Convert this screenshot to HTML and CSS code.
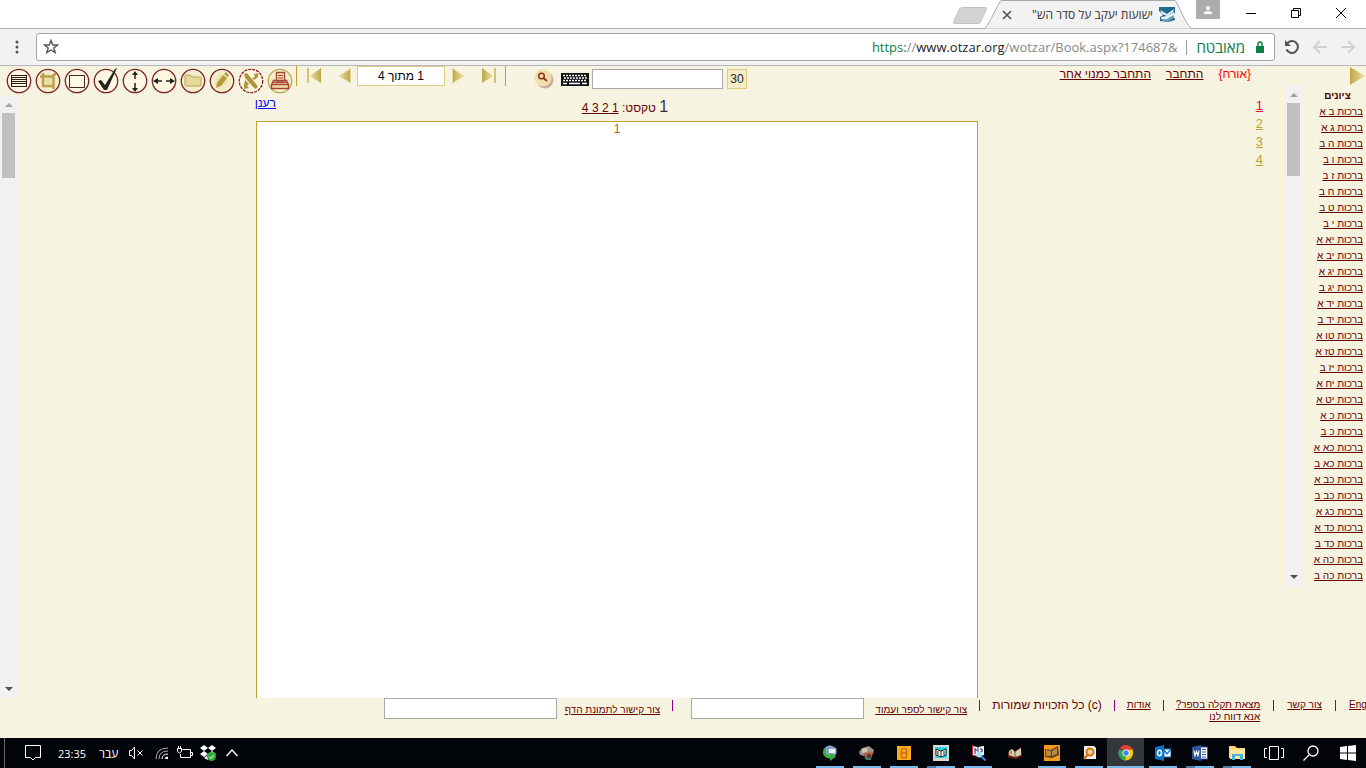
FILE: index.html
```html
<!DOCTYPE html>
<html lang="he">
<head>
<meta charset="utf-8">
<title>ישועות יעקב על סדר הש"ס</title>
<link rel="stylesheet" href="styles.css">
</head>
<body>
<header class="tabs">
  <button class="new-tab" aria-label="כרטיסייה חדשה"></button>
  <div class="tab">
    <svg class="tab-shape" viewBox="0 0 208 29" preserveAspectRatio="none"><path d="M0 28.5L2 28C4 27 15 1 17 .5H191C193 1 203 27 206 28L208 28.5Z" fill="#f2f2f2"/><path d="M0 28.5C4 28 15 1 17 .5H191C193 1 203 28 208 28.5" fill="none" stroke="#a9a9a9"/></svg>
    <button class="tab-close" aria-label="סגור"><svg width="10" height="10" viewBox="0 0 10 10"><path d="M1 1L9 9M9 1L1 9" stroke="#555" stroke-width="1.7"/></svg></button>
    <span class="tab-title" dir="rtl">ישועות יעקב על סדר הש"</span>
    <svg width="16" height="16" viewBox="0 0 16 16"><path d="M0 0H16V6L13 8 16 12V13L9 15 1 14V10L4 8 0 4Z" fill="#24688c"/><path d="M1 3L8 7 15 2 14 5 8 9 3 7ZM2 10L8 9 15 5V8L7 13 2 12Z" fill="#e5f1f6"/><path d="M2 13L8 12 15 8V11L8 15Z" fill="#6ea2ba"/></svg>
  </div>
  <button class="user" aria-label="משתמש"><svg width="10" height="10" viewBox="0 0 10 10"><circle cx="5" cy="3" r="2" fill="#fff"/><path d="M1 9V8Q1 6 5 6T9 8V9Z" fill="#fff"/></svg></button>
  <div class="win">
    <button aria-label="מזער"><svg width="12" height="12"><path d="M1 6.500H11" stroke="#000"/></svg></button>
    <button aria-label="שחזר"><svg width="12" height="12" fill="none" stroke="#000"><path d="M1.500 3.500H8.500V10.500H1.500ZM3.500 3.500V1.500H10.500V8.500H8.500"/></svg></button>
    <button aria-label="סגור חלון"><svg width="12" height="12" stroke="#000"><path d="M1 1L11 11M11 1L1 11"/></svg></button>
  </div>
</header>
<nav class="omni">
  <button aria-label="תפריט"><svg width="4" height="14" fill="#555"><circle cx="2" cy="2" r="1.500"/><circle cx="2" cy="7" r="1.500"/><circle cx="2" cy="12" r="1.500"/></svg></button>
  <div class="address">
    <svg width="16" height="16" viewBox="0 0 16 16"><path d="M8 1.500L9.800 6H14.500L10.800 9 12.200 13.700 8 11 3.800 13.700 5.200 9 1.500 6H6.200Z" fill="none" stroke="#555" stroke-width="1.400"/></svg>
    <div class="url" role="textbox" contenteditable="true" spellcheck="false" aria-label="כתובת"><span class="scheme">https:</span>//<span class="host">www.otzar.org</span>/wotzar/Book.aspx?174687&amp;</div>
    <span class="rule"></span>
    <span class="secure">מאובטח</span>
    <svg class="lock" width="8" height="12" viewBox="0 0 8 12"><path d="M2 6V3Q2 1 4 1T6 3V6" fill="none" stroke="#0b8043" stroke-width="1.500"/><path d="M0 5H8V12H0Z" fill="#0b8043"/></svg>
  </div>
  <button aria-label="רענן"><svg width="16" height="16" viewBox="0 0 16 16" fill="none" stroke="#555" stroke-width="2"><path d="M3 4.500A6 6 0 1 1 2.500 10.500"/><path d="M1 1V7H7Z" fill="#555" stroke="none"/></svg></button>
  <button aria-label="אחורה"><svg width="16" height="16" fill="none" stroke="#d0d0d0" stroke-width="2"><path d="M15 8H2M8 2L2 8 8 14"/></svg></button>
  <button aria-label="קדימה"><svg width="16" height="16" fill="none" stroke="#d0d0d0" stroke-width="2"><path d="M1 8H14M8 2L14 8 8 14"/></svg></button>
</nav>
<svg class="defs" width="0" height="0" aria-hidden="true"><defs><linearGradient id="gold" x2="1"><stop stop-color="#bfa645"/><stop offset="1" stop-color="#eee1a5"/></linearGradient><linearGradient id="goldl" x2="1"><stop stop-color="#e8dca3"/><stop offset="1" stop-color="#bfa645"/></linearGradient><radialGradient id="disc"><stop stop-color="#e6dba1"/><stop offset="1" stop-color="#faf4d8"/></radialGradient></defs></svg>
<main class="page">
  <div class="main">
    <div class="toolbar">
      <div class="tools">
        <button aria-label="שורות"><svg viewBox="0 0 26 26"><circle cx="13" cy="13" r="11.700" fill="#fff7df" stroke="#7b2424" stroke-width="1.300"/><path d="M5 7.500H21M5 9.500H21M5 11.500H21M5 13.500H21M5 15.500H21M5 18.500H21M5.500 7V19M20.500 7V19" stroke="#2b1a10"/></svg></button>
        <button aria-label="חיתוך"><svg viewBox="0 0 26 26"><circle cx="13" cy="13" r="11.700" fill="url(#disc)" stroke="#7b2424" stroke-width="1.300"/><path d="M8 5V18H18M5 8.500H18.500V21M18 8L21 5" fill="none" stroke="#b9a24c" stroke-width="2.500"/></svg></button>
        <button aria-label="מסגרת"><svg viewBox="0 0 26 26"><circle cx="13" cy="13" r="11.700" fill="#fff7df" stroke="#7b2424" stroke-width="1.300"/><path d="M5.500 7.500H20.500V19.500H5.500Z" fill="#fff8e5" stroke="#3b2a18"/></svg></button>
        <button aria-label="סימון"><svg viewBox="0 0 26 26"><circle cx="13" cy="13" r="11.700" fill="#fff7df" stroke="#7b2424" stroke-width="1.300"/><path d="M5 13L8 12 12 17 22 1 24 0 14 22H11Z" fill="#222"/></svg></button>
        <button aria-label="התאם לגובה"><svg viewBox="0 0 26 26"><circle cx="13" cy="13" r="11.700" fill="#fff7df" stroke="#7b2424" stroke-width="1.300"/><path d="M13 5V11M13 15V21" stroke="#222" stroke-width="1.500"/><path d="M10 7L13 3 16 7ZM10 20L13 24 16 20Z" fill="#222"/></svg></button>
        <button aria-label="התאם לרוחב"><svg viewBox="0 0 26 26"><circle cx="13" cy="13" r="11.700" fill="#fff7df" stroke="#7b2424" stroke-width="1.300"/><path d="M5 13H11M15 13H21" stroke="#222" stroke-width="1.500"/><path d="M7 10L2 13 7 16ZM19 10L24 13 19 16Z" fill="#222"/></svg></button>
        <button aria-label="תיקייה"><svg viewBox="0 0 26 26"><circle cx="13" cy="13" r="11.700" fill="url(#disc)" stroke="#7b2424" stroke-width="1.300"/><path d="M5 8Q5 7 6 7H10L12 9H20Q21 9 21 10V17Q21 18 20 18H6Q5 18 5 17Z" fill="#e5d999" stroke="#b9a552"/></svg></button>
        <button aria-label="עריכה"><svg viewBox="0 0 26 26"><circle cx="13" cy="13" r="11.700" fill="url(#disc)" stroke="#7b2424" stroke-width="1.300"/><path d="M7 20L8 15 14 7 18 10 12 18ZM15 6L17 4 20 7 19 9Z" fill="#b39a3b"/></svg></button>
        <button aria-label="זיהוי טקסט"><svg viewBox="0 0 26 26"><circle cx="13" cy="13" r="11.700" fill="#fff7df" stroke="#7b2424" stroke-width="1.300" stroke-dasharray="3 1"/><path d="M6 6L9 5 18 16 20 19 17 21 7 10ZM16 6L20 5 20 9 16 12 14 10 17 9ZM7 12L11 16 9 18 11 20 6 21V17Z" fill="#ad953d"/></svg></button>
        <button aria-label="הדפסה"><svg viewBox="0 0 26 26"><circle cx="13" cy="13" r="11.700" fill="url(#disc)" stroke="#bba74e" stroke-width="1.300"/><path d="M9.500 4.500H17.500V13H9.500ZM6.500 12.500H19.500L21.500 16.500H4.500ZM4.500 16.500H21.500V20.500H4.500Z" fill="#f0dfad" stroke="#a64334" stroke-width="1.300"/><path d="M11 7.500H16M11 10H16M6 14.500H20" stroke="#a64334"/></svg></button>
      </div>
      <div class="pager">
        <button aria-label="ראשון"><svg width="16" height="16"><path d="M1 0H3V15H1Z" fill="#d7c46c"/><path d="M15 0V15L4 8Z" fill="url(#goldl)"/></svg></button>
        <button aria-label="הקודם"><svg width="13" height="16"><path d="M12.500 .5V15L1 8Z" fill="url(#goldl)" stroke="#e6dba5"/></svg></button>
        <input class="page-no" dir="rtl" value="1 מתוך 4" aria-label="עמוד">
        <button aria-label="הבא"><svg width="13" height="16"><path d="M.5 .5V15L12 8Z" fill="url(#gold)" stroke="#e6dba5"/></svg></button>
        <button aria-label="אחרון"><svg width="16" height="16"><path d="M13 0H15V15H13Z" fill="#d7c46c"/><path d="M1 0V15L12 8Z" fill="url(#gold)"/></svg></button>
      </div>
      <div class="search">
        <button aria-label="חיפוש"><svg width="20" height="20"><circle cx="11" cy="11" r="8.500" fill="#c9a9a3"/><circle cx="9" cy="9" r="8.500" fill="#f1dfa8"/><circle cx="7.500" cy="7" r="2.800" fill="none" stroke="#8a3528" stroke-width="1.500"/><path d="M9.500 9L13 12" stroke="#8a3528" stroke-width="2"/></svg></button>
        <button class="keys" aria-label="מקלדת"><svg width="28" height="13"><path d="M0 0H28V13H0Z" fill="#111"/><path d="M2 2.500H26M3 5H26M2 7.500H26" stroke="#fff" stroke-width="1.500" stroke-dasharray="2 1"/><path d="M2 10.500H6M8 10.500H19M21 10.500H26" stroke="#fff" stroke-width="1.500"/></svg></button>
        <input aria-label="טקסט לחיפוש">
        <button class="thirty">30</button>
      </div>
      <div class="account" dir="rtl"><span class="guest">{אורח}</span><a href="#">התחבר</a><a href="#">התחבר כמנוי אחר</a></div>
    </div>
    <div class="content">
      <div class="scroll"><i class="up"></i><i class="thumb"></i><i class="down"></i></div>
      <div class="refresh"><a href="#">רענן</a></div>
      <section class="doc">
        <p class="pages" dir="rtl"><span class="big">1</span> טקסט: <a href="#">1 </a><a href="#">2 </a><a href="#">3 </a><a href="#">4</a></p>
        <div class="sheet">1</div>
      </section>
      <nav class="thumbs"><a class="on" href="#">1</a><a href="#">2</a><a href="#">3</a><a href="#">4</a></nav>
    </div>
  </div>
  <aside class="side">
    <button class="fold" aria-label="הסתר"><svg width="16" height="18"><path d="M1 0V18L16 9Z" fill="url(#gold)"/></svg></button>
    <div class="side-body">
      <div class="scroll"><i class="up"></i><i class="thumb"></i><i class="down"></i></div>
      <nav class="refs" dir="rtl">
        <h2>ציונים</h2>
        <a href="#">ברכות ב א</a><a href="#">ברכות ג א</a><a href="#">ברכות ה ב</a><a href="#">ברכות ו ב</a><a href="#">ברכות ז ב</a><a href="#">ברכות ח ב</a><a href="#">ברכות ט ב</a><a href="#">ברכות י ב</a><a href="#">ברכות יא א</a><a href="#">ברכות יב א</a><a href="#">ברכות יג א</a><a href="#">ברכות יג ב</a><a href="#">ברכות יד א</a><a href="#">ברכות יד ב</a><a href="#">ברכות טו א</a><a href="#">ברכות טז א</a><a href="#">ברכות יז ב</a><a href="#">ברכות יח א</a><a href="#">ברכות יט א</a><a href="#">ברכות כ א</a><a href="#">ברכות כ ב</a><a href="#">ברכות כא א</a><a href="#">ברכות כא ב</a><a href="#">ברכות כב א</a><a href="#">ברכות כב ב</a><a href="#">ברכות כג א</a><a href="#">ברכות כד א</a><a href="#">ברכות כד ב</a><a href="#">ברכות כה א</a><a href="#">ברכות כה ב</a>
      </nav>
    </div>
  </aside>
</main>
<footer class="foot" dir="rtl">
  <a class="end" href="#" dir="ltr">Eng</a><i class="roomy"></i>
  <a href="#">צור קשר</a><i class="roomy"></i>
  <a href="#">מצאת תקלה בספר?<br>אנא דווח לנו</a><i></i>
  <a href="#">אודות</a><i></i>
  <span class="copy">(c) כל הזכויות שמורות</span><i></i>
  <div class="link-box"><a href="#">צור קישור לספר ועמוד</a><input aria-label="קישור לספר ועמוד"></div><i></i>
  <div class="link-box"><a href="#">צור קישור לתמונת הדף</a><input aria-label="קישור לתמונת הדף"></div>
</footer>
<div class="taskbar">
  <div class="tray">
    <svg width="18" height="18" fill="none" stroke="#fff"><path d="M1.500 1.500H16.500V13.500H11.500L9 16 6.500 13.500H1.500Z"/></svg>
    <span class="clock">23:35</span>
    <span class="lang">עבר</span>
    <svg width="16" height="16" fill="none" stroke="#fff"><path d="M1.500 5.500H3.500L6.500 2V14L3.500 10.500H1.500ZM9.500 5.500L14.500 10.500M14.500 5.500L9.500 10.500"/></svg>
    <svg class="wifi" width="15" height="15" fill="none" stroke="#aaa"><path d="M1 13Q1 2 13 2M4 13Q4 5 13 5"/><path d="M7 13Q7 8 13 8M10 13Q10 11 13 11" stroke="#fff"/><path d="M11 11H13V13H11Z" fill="#fff" stroke="none"/></svg>
    <svg width="18" height="16" fill="none" stroke="#fff"><path d="M6.500 4.500H14.500V12.500H4.500V9M14.500 7.500H16.500V10.500H14.500M1.500 3.500H5.500V6.500L3.500 8 1.500 6.500ZM2.500 1V3M4.500 1V3"/></svg>
    <svg class="box" width="18" height="18"><path d="M5 1L9 4 5 7 1 4ZM13 1L17 4 13 7 9 4ZM5 7L9 10 5 13 1 10ZM9 10L13 7 17 10 13 13ZM5 14L9 11V16Z" fill="#fff"/><circle cx="12.500" cy="12.500" r="4.500" fill="#2cab3c"/><path d="M10 12.500L12 14.500 15 11" fill="none" stroke="#fff"/></svg>
    <svg width="14" height="16" fill="none" stroke="#fff" stroke-width="1.300"><path d="M1.500 11L7 5 12.500 11"/></svg>
  </div>
  <div class="apps">
    <button class="run" aria-label="סנכרון"><svg viewBox="0 0 16 16"><circle cx="8" cy="7" r="6.500" fill="#8cb0d8"/><path d="M6 3H14V9H6Z" fill="#e7eefa" stroke="#5876a8"/><path d="M2 3Q-2 12 8 13V16L14 11.500 8 8V10.500Q3 10 4 4Z" fill="#3aad35"/></svg></button>
    <button class="run" aria-label="תמונות"><svg viewBox="0 0 16 16"><path d="M0 7L3 3 10 1 15 5 14 9 7 8 5 11 1 10Z" fill="#9a8e7e"/><path d="M5 8L14 7 13 12 6 14Z" fill="#b85b43"/><path d="M3 4L9 3 8 7 3 8Z" fill="#cdc6b6"/><path d="M7 12H12V15H7Z" fill="#417760"/><circle cx="10" cy="11" r="2" fill="#513228"/></svg></button>
    <button class="run" aria-label="8"><svg viewBox="0 0 16 16"><path d="M1 1H15V15H1Z" fill="#faac1c"/><path d="M5.500 4.500L6.500 3.500H9.500L10.500 4.500V12L9.500 13H6.500L5.500 12ZM6 8H10" fill="none" stroke="#d2691e" stroke-width="1.600"/></svg></button>
    <button class="run multi" aria-label="ספר"><svg viewBox="0 0 16 16"><path d="M0 0H16V16H0Z" fill="#d9d7d0"/><path d="M2 2H14V13H2Z" fill="#21d7e7"/><path d="M3 4L8 6 13 4V10L8 12 3 10Z" fill="#fff" stroke="#222"/><path d="M8 6V12M5 6V10M11 6V10" stroke="#222"/></svg></button>
    <button class="run" aria-label="חיפוש בספר"><svg viewBox="0 0 16 16"><path d="M2 1L8 2 14 1V10L8 11 2 10Z" fill="#fff"/><path d="M2.500 0V10.500L8 11.500" fill="none" stroke="#c51e2b"/><path d="M4 4H6V6H4M10 4H12V7H10M8 2V10M4 8H6" fill="none" stroke="#132277"/><circle cx="9.500" cy="9.500" r="3" fill="#9eeaff"/><path d="M11.500 11.500L15.500 15.500" stroke="#3186f5" stroke-width="2"/></svg></button>
    <button aria-label="ספרייה"><svg viewBox="0 0 16 16"><path d="M1 7L5 4 8 6 14 2 15 11 9 14 1 12Z" fill="#7c211d"/><path d="M2 6L5 4 8 7 14 3 14 10 8 12 2 10Z" fill="#d8ceb1"/><path d="M8 6V12M4 6V9" stroke="#576039"/></svg></button>
    <button class="run" aria-label="אוצר"><svg viewBox="0 0 16 16"><path d="M0 0H16V16H0Z" fill="#f4991e"/><path d="M1 4L7 5 14 1 15 10 8 13 1 12Z" fill="#594221"/><path d="M2 5L7 6 7 11 2 11ZM8 6L13 3V9L8 11Z" fill="#b38b46"/></svg></button>
    <button class="run" aria-label="איתור"><svg viewBox="0 0 16 16"><path d="M3 1H13L15 3V14H3Z" fill="#eee"/><circle cx="9" cy="7" r="3.500" fill="#f6d39a" stroke="#d47411" stroke-width="2"/><path d="M7 9L3 14" stroke="#d47411" stroke-width="2.500"/></svg></button>
    <button class="run active" aria-label="Chrome"><svg viewBox="0 0 16 16"><path d="M8 8L2 3A7.500 7.500 0 0 1 15 5Z" fill="#e34133"/><path d="M8 8H15A7.500 7.500 0 0 1 7 15.500Z" fill="#fbc916"/><path d="M8 8L7 15.500A7.500 7.500 0 0 1 1.500 4Z" fill="#30a652"/><path d="M8 4.500H14.500A7.500 7.500 0 0 1 15 9L8 11Z" fill="#fbc916"/><path d="M2 3A7.500 7.500 0 0 1 14.500 4.500H8Z" fill="#e34133"/><circle cx="8" cy="8" r="3.500" fill="#fff"/><circle cx="8" cy="8" r="2.700" fill="#4285f4"/></svg></button>
    <button class="run" aria-label="Outlook"><svg viewBox="0 0 16 16"><path d="M9 4H16V12H9Z" fill="#fff" stroke="#0872c6"/><path d="M9 5L12 9 16 4" fill="none" stroke="#0872c6" stroke-width="1.300"/><path d="M0 2L9 0V16L0 14Z" fill="#0872c6"/><ellipse cx="4.500" cy="8" rx="2" ry="2.700" fill="none" stroke="#fff" stroke-width="1.500"/></svg></button>
    <button class="run multi" aria-label="Word"><svg viewBox="0 0 16 16"><path d="M8 2H15.500V14H8Z" fill="#fff" stroke="#2b579a"/><path d="M10 4.500H14M10 7H14M10 9.500H14M10 12H14" stroke="#2b579a"/><path d="M0 2L9 0V16L0 14Z" fill="#2b579a"/><path d="M2 5.500L3 10.500 4.500 6.500 6 10.500 7 5.500" fill="none" stroke="#fff" stroke-width="1.200"/></svg></button>
    <button class="run multi" aria-label="סייר הקבצים"><svg viewBox="0 0 16 16"><path d="M0 1H6L8 3H16V13H0Z" fill="#f8d671"/><path d="M1 4H16V14H1Z" fill="#ffe69b"/><path d="M3 15V9H14V15H11V11H6V15Z" fill="#45b3e8"/></svg></button>
    <button aria-label="תצוגת משימות"><svg class="wide" viewBox="0 0 20 16" fill="none" stroke="#fff"><path d="M5.500 1.500H14.500V14.500H5.500ZM3 3.500H.5V12.500H3M17 3.500H19.500V12.500H17"/></svg></button>
    <button aria-label="חיפוש"><svg viewBox="0 0 16 16" fill="none" stroke="#fff" stroke-width="1.300"><circle cx="10" cy="6" r="5"/><path d="M6.500 9.500L.5 15.500"/></svg></button>
    <button aria-label="התחל"><svg viewBox="0 0 16 16"><path d="M0 2L7 1V7.500H0ZM8 1L16 0V7.500H8ZM0 8.500H7V15L0 14ZM8 8.500H16V16L8 15Z" fill="#fff"/></svg></button>
  </div>
</div>
</body>
</html>
```

FILE: styles.css
```css
* { box-sizing: border-box; }
body { margin: 0; height: 100vh; display: flex; flex-direction: column; overflow: hidden; background: #f7f3e1; color: #600; font-family: "Liberation Sans", Arial, sans-serif; font-size: 12px; }
button { padding: 0; border: 0; background: none; display: flex; align-items: center; justify-content: center; font: inherit; }
svg { display: block; flex: none; }
a { color: #600; }
i { flex: none; }
input { font: inherit; border: 1px solid #a9a9a9; background: #fff; padding: 0 2px; }
.defs { position: absolute; }

.tabs { flex: none; height: 29px; display: flex; justify-content: flex-end; background: #fff; border-bottom: 1px solid #b4b4b4; font-family: "Open Sans", "Noto Sans", sans-serif; color: #333; }
.new-tab { width: 28px; height: 17px; margin: 7px 0 0; background: #d3d3d3; border: 1px solid #c2c2c2; border-radius: 3px; transform: skewX(-24deg); }
.tab { position: relative; width: 208px; height: 29px; margin-right: 4px; display: flex; align-items: center; gap: 6px; padding: 0 17px 0 18px; }
.tab > * { position: relative; }
.tab .tab-shape { position: absolute; left: 0; top: 0; width: 100%; height: 29px; }
.tab-title { flex: 1; white-space: nowrap; font-size: 12px; overflow: hidden; }
.user { width: 24px; height: 19px; background: #adadad; }
.win { display: flex; height: 26px; padding: 0 3px 0 8px; }
.win button { width: 45px; }

.omni { flex: none; height: 37px; display: flex; align-items: center; padding: 0 10px 0 15px; gap: 12px; background: #f2f2f2; border-bottom: 1px solid #b8b6b6; font-family: "Open Sans", "Noto Sans", sans-serif; }
.address { flex: 1; height: 28px; margin: 0 -3px 0 5px; display: flex; align-items: center; padding: 0 10px 0 6px; background: #fff; border: 1px solid #a6a6a6; border-radius: 3px; font-size: 14px; }
.url { flex: 1; text-align: right; color: #888; outline: 0; white-space: nowrap; font-size: 13px; }
.scheme { color: #0b8043; }
.host { color: #222; }
.rule { width: 1px; height: 15px; margin: 0 9px; background: #999; }
.secure { color: #0b8043; font-size: 15px; line-height: 20px; }
.lock { margin-left: 11px; }

.page { flex: 1; min-height: 0; display: flex; }
.main { flex: 1; min-width: 0; display: flex; flex-direction: column; }
.toolbar { flex: none; height: 30px; display: flex; align-items: flex-start; }
.tools { display: flex; gap: 3px; padding: 2px 3px 0 6px; }
.tools svg { width: 26px; height: 26px; }
.pager { height: 20px; display: flex; align-items: center; border: solid #c0a030; border-width: 0 1px; padding: 0 8px 0 9px; }
.pager button:nth-of-type(1) { margin-right: 16px; }
.pager button:nth-of-type(4) { margin-left: 16px; }
.page-no { width: 88px; height: 20px; margin: 0 7px 0 6px; border-color: #dfcb7e; text-align: center; }
.search { display: flex; align-items: center; padding: 3px 0 0 28px; }
.search input { width: 131px; height: 20px; margin: 0 4px 0 3px; }
.keys { margin-left: 7px; }
.thirty { width: 20px; height: 20px; border: 1px solid #dfcb7e; background: #f5edc8; color: #222; }
.account { flex: 1; display: flex; gap: 15px; padding: 0 34px 0 0; line-height: 16px; }
.guest { color: #f00; }

.content { flex: 1; min-height: 0; display: grid; grid-template-columns: 17px 239fr 722fr 307fr; }
.scroll { flex: none; width: 17px; display: flex; flex-direction: column; align-items: center; background: #f1f1f1; }
.up, .down { border: 4px solid transparent; }
.up { border-top: 0; border-bottom-color: #a3a3a3; margin: 7px 0 6px; }
.down { border-bottom: 0; border-top-color: #505050; margin: auto 0 7px; }
.thumb { width: 13px; height: 65px; background: #c1c1c1; }
.refresh { text-align: right; line-height: 14px; }
.refresh a { color: #00f; margin-right: -20px; }
.doc { display: flex; flex-direction: column; }
.pages { margin: 0; height: 25px; line-height: 21px; text-align: center; padding-left: 16px; }
.big { font-size: 16px; color: #333; }
.sheet { flex: 1; background: #fff; border: 1px solid #c0a030; border-bottom: 0; text-align: center; line-height: 14px; color: #a06418; }
.thumbs { display: flex; flex-direction: column; align-items: flex-end; padding: 1px 22px 0 0; line-height: 18px; font-size: 13px; }
.thumbs a { color: #c0a030; }
.thumbs .on { color: #f03; }

.side { flex: none; width: 81px; }
.fold { height: 20px; margin: 0 1px 0 auto; }
.side-body { height: 500px; display: flex; }
.side .thumb { height: 73px; }
.refs { flex: 1; display: flex; flex-direction: column; padding: 2px 3px 0 0; font-size: 10px; line-height: 16px; white-space: nowrap; }
.refs h2 { margin: 0; padding-left: 14px; padding-right: 4px; font-size: 10px; line-height: 16px; text-align: center; color: #400; }

.foot { flex: none; height: 40px; display: flex; align-items: flex-start; font-size: 10px; line-height: 12px; white-space: nowrap; overflow: hidden; }
.foot > a, .copy { margin-top: 1px; }
.foot > i { width: 1px; height: 11px; margin: 2px 12px 0; background: #808; }
.foot > .roomy { margin: 2px 13px 0; }
.foot .end { width: 17px; }
.copy { font-size: 12px; }
.link-box { display: flex; align-items: center; gap: 5px; margin-left: 6px; }
.link-box a { min-width: 98px; padding-top: 2px; }
.link-box input { width: 173px; height: 21px; }

.taskbar { flex: none; height: 30px; display: flex; justify-content: space-between; background: #010409; color: #fff; font-family: "Open Sans", "Noto Sans", sans-serif; font-size: 12px; }
.tray { display: flex; align-items: center; margin-left: 4px; border-left: 1px solid #666; padding-left: 19px; }
.clock { margin: 0 13px 0 16px; font-size: 11px; }
.lang { margin-right: 10px; }
.wifi { margin: 0 6px 0 11px; }
.box { margin: 0 8px 0 5px; }
.apps { display: flex; }
.apps button { width: 37px; position: relative; }
.apps svg { width: 16px; height: 16px; }
.apps .wide { width: 20px; }
.run::after { content: ""; position: absolute; left: 5px; right: 4px; bottom: 0; height: 2px; background: #76b9ed; }
.multi::after { background: linear-gradient(90deg, #4f7ea6 9px, #76b9ed 9px); }
.active { background: #34373a; }
.active::after { left: 0; right: 0; }
```
